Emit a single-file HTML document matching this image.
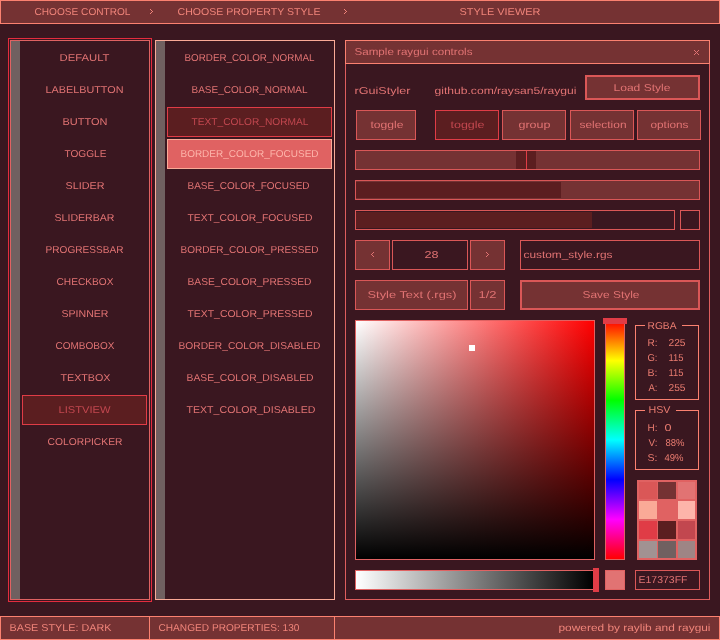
<!DOCTYPE html><html><head><meta charset="utf-8"><style>html,body{margin:0;padding:0;background:#3a1720;overflow:hidden}svg{display:block;will-change:transform}text{text-rendering:geometricPrecision;font-family:"Liberation Sans",sans-serif;font-size:10px}</style></head><body><svg width="720" height="640" viewBox="0 0 720 640"><defs>
<linearGradient id="gh" x1="0" y1="0" x2="1" y2="0"><stop offset="0" stop-color="#fff"/><stop offset="1" stop-color="#f00"/></linearGradient>
<linearGradient id="gv" x1="0" y1="0" x2="0" y2="1"><stop offset="0" stop-color="#000" stop-opacity="0"/><stop offset="1" stop-color="#000" stop-opacity="1"/></linearGradient>
<linearGradient id="hue" x1="0" y1="0" x2="0" y2="1">
<stop offset="0" stop-color="#f00"/><stop offset="0.1667" stop-color="#ff0"/><stop offset="0.3333" stop-color="#0f0"/>
<stop offset="0.5" stop-color="#0ff"/><stop offset="0.6667" stop-color="#00f"/><stop offset="0.8333" stop-color="#f0f"/><stop offset="1" stop-color="#f00"/></linearGradient>
<linearGradient id="ga" x1="0" y1="0" x2="1" y2="0"><stop offset="0" stop-color="#fff"/><stop offset="1" stop-color="#000"/></linearGradient>
</defs><g shape-rendering="crispEdges"><rect x="0" y="0" width="720" height="640" fill="#3a1720"/><rect x="0" y="0" width="720" height="24" fill="#fb8170"/><rect x="1" y="1" width="718" height="22" fill="#753233"/><rect x="150" y="9" width="1" height="1" fill="#f0847a"/><rect x="151" y="10" width="1" height="1" fill="#f0847a"/><rect x="152" y="11" width="1" height="1" fill="#f0847a"/><rect x="151" y="12" width="1" height="1" fill="#f0847a"/><rect x="150" y="13" width="1" height="1" fill="#f0847a"/><rect x="344" y="9" width="1" height="1" fill="#f0847a"/><rect x="345" y="10" width="1" height="1" fill="#f0847a"/><rect x="346" y="11" width="1" height="1" fill="#f0847a"/><rect x="345" y="12" width="1" height="1" fill="#f0847a"/><rect x="344" y="13" width="1" height="1" fill="#f0847a"/><rect x="0" y="616" width="720" height="24" fill="#fb8170"/><rect x="1" y="617" width="718" height="22" fill="#753233"/><rect x="149" y="616" width="1" height="24" fill="#fb8170"/><rect x="334" y="616" width="1" height="24" fill="#fb8170"/><rect x="8" y="38" width="144" height="564" fill="#e42c3e"/><rect x="9" y="39" width="142" height="562" fill="#3a1720"/><rect x="10" y="40" width="140" height="560" fill="#e06262"/><rect x="11" y="41" width="138" height="558" fill="#3a1720"/><rect x="11" y="41" width="9" height="558" fill="#706060"/><rect x="22" y="395" width="125" height="30" fill="#e03c46"/><rect x="23" y="396" width="123" height="28" fill="#5b1e20"/><rect x="155" y="40" width="180" height="560" fill="#faaa97"/><rect x="156" y="41" width="178" height="558" fill="#3a1720"/><rect x="156" y="41" width="9" height="558" fill="#706060"/><rect x="167" y="107" width="165" height="30" fill="#e03c46"/><rect x="168" y="108" width="163" height="28" fill="#5b1e20"/><rect x="167" y="139" width="165" height="30" fill="#faaa97"/><rect x="168" y="140" width="163" height="28" fill="#e06262"/><rect x="345" y="40" width="365" height="560" fill="#df5e5e"/><rect x="346" y="41" width="363" height="558" fill="#3a1720"/><rect x="345" y="40" width="365" height="24" fill="#fb8170"/><rect x="346" y="41" width="363" height="22" fill="#753233"/><rect x="694" y="50" width="1" height="1" fill="#e17373"/><rect x="698" y="50" width="1" height="1" fill="#e17373"/><rect x="695" y="51" width="1" height="1" fill="#e17373"/><rect x="697" y="51" width="1" height="1" fill="#e17373"/><rect x="696" y="52" width="1" height="1" fill="#e17373"/><rect x="695" y="53" width="1" height="1" fill="#e17373"/><rect x="697" y="53" width="1" height="1" fill="#e17373"/><rect x="694" y="54" width="1" height="1" fill="#e17373"/><rect x="698" y="54" width="1" height="1" fill="#e17373"/><rect x="585" y="75" width="115" height="25" fill="#da5757"/><rect x="587" y="77" width="111" height="21" fill="#753233"/><rect x="356" y="110" width="60" height="30" fill="#da5757"/><rect x="357" y="111" width="58" height="28" fill="#753233"/><rect x="435" y="110" width="64" height="30" fill="#e03c46"/><rect x="436" y="111" width="62" height="28" fill="#5b1e20"/><rect x="502" y="110" width="64" height="30" fill="#da5757"/><rect x="503" y="111" width="62" height="28" fill="#753233"/><rect x="570" y="110" width="64" height="30" fill="#da5757"/><rect x="571" y="111" width="62" height="28" fill="#753233"/><rect x="637" y="110" width="64" height="30" fill="#da5757"/><rect x="638" y="111" width="62" height="28" fill="#753233"/><rect x="355" y="150" width="345" height="20" fill="#da5757"/><rect x="356" y="151" width="343" height="18" fill="#753233"/><rect x="516" y="151" width="20" height="18" fill="#5b1e20"/><rect x="526" y="151" width="1" height="18" fill="#e03c46"/><rect x="355" y="180" width="345" height="20" fill="#da5757"/><rect x="356" y="181" width="343" height="18" fill="#753233"/><rect x="356" y="182" width="205" height="16" fill="#5b1e20"/><rect x="355" y="210" width="320" height="20" fill="#da5757"/><rect x="356" y="211" width="318" height="18" fill="#3a1720"/><rect x="356" y="212" width="236" height="16" fill="#5b1e20"/><rect x="680" y="210" width="20" height="20" fill="#da5757"/><rect x="681" y="211" width="18" height="18" fill="#3a1720"/><rect x="355" y="240" width="35" height="30" fill="#da5757"/><rect x="356" y="241" width="33" height="28" fill="#753233"/><rect x="373" y="252" width="1" height="1" fill="#e17373"/><rect x="372" y="253" width="1" height="1" fill="#e17373"/><rect x="371" y="254" width="1" height="1" fill="#e17373"/><rect x="372" y="255" width="1" height="1" fill="#e17373"/><rect x="373" y="256" width="1" height="1" fill="#e17373"/><rect x="392" y="240" width="76" height="30" fill="#da5757"/><rect x="393" y="241" width="74" height="28" fill="#3a1720"/><rect x="470" y="240" width="35" height="30" fill="#da5757"/><rect x="471" y="241" width="33" height="28" fill="#753233"/><rect x="486" y="252" width="1" height="1" fill="#e17373"/><rect x="487" y="253" width="1" height="1" fill="#e17373"/><rect x="488" y="254" width="1" height="1" fill="#e17373"/><rect x="487" y="255" width="1" height="1" fill="#e17373"/><rect x="486" y="256" width="1" height="1" fill="#e17373"/><rect x="520" y="240" width="180" height="30" fill="#da5757"/><rect x="521" y="241" width="178" height="28" fill="#3a1720"/><rect x="355" y="280" width="113" height="30" fill="#da5757"/><rect x="356" y="281" width="111" height="28" fill="#753233"/><rect x="470" y="280" width="35" height="30" fill="#da5757"/><rect x="471" y="281" width="33" height="28" fill="#753233"/><rect x="520" y="280" width="180" height="30" fill="#da5757"/><rect x="522" y="282" width="176" height="26" fill="#753233"/><rect x="355" y="320" width="240" height="240" fill="#e06262"/><rect x="356" y="321" width="238" height="238" fill="url(#gh)"/><rect x="356" y="321" width="238" height="238" fill="url(#gv)"/><rect x="469" y="345" width="6" height="6" fill="#ffffff"/><rect x="605" y="320" width="20" height="240" fill="#e06262"/><rect x="606" y="321" width="18" height="238" fill="url(#hue)"/><rect x="603" y="318" width="24" height="6" fill="#e03c46"/><rect x="355" y="570" width="240" height="20" fill="#e06262"/><rect x="356" y="571" width="237" height="18" fill="url(#ga)"/><rect x="593" y="568" width="6" height="24" fill="#e03c46"/><rect x="605" y="570" width="20" height="20" fill="#e06262"/><rect x="606" y="571" width="18" height="18" fill="#e17373"/><rect x="635" y="570" width="65" height="20" fill="#da5757"/><rect x="636" y="571" width="63" height="18" fill="#3a1720"/><rect x="635" y="325" width="10" height="1" fill="#fb8170"/><rect x="682" y="325" width="17" height="1" fill="#fb8170"/><rect x="635" y="399" width="64" height="1" fill="#fb8170"/><rect x="635" y="325" width="1" height="75" fill="#fb8170"/><rect x="698" y="325" width="1" height="75" fill="#fb8170"/><rect x="635" y="410" width="10" height="1" fill="#fb8170"/><rect x="676" y="410" width="23" height="1" fill="#fb8170"/><rect x="635" y="469" width="64" height="1" fill="#fb8170"/><rect x="635" y="410" width="1" height="60" fill="#fb8170"/><rect x="698" y="410" width="1" height="60" fill="#fb8170"/><rect x="637" y="480" width="60" height="80" fill="#e06262"/><rect x="639" y="482" width="18" height="17" fill="#da5757"/><rect x="658" y="482" width="18" height="17" fill="#753233"/><rect x="678" y="482" width="17" height="17" fill="#e17373"/><rect x="639" y="501" width="18" height="18" fill="#faaa97"/><rect x="658" y="501" width="18" height="18" fill="#e06262"/><rect x="678" y="501" width="17" height="18" fill="#fdb4aa"/><rect x="639" y="521" width="18" height="18" fill="#e03c46"/><rect x="658" y="521" width="18" height="18" fill="#5b1e20"/><rect x="678" y="521" width="17" height="18" fill="#c2474f"/><rect x="639" y="541" width="18" height="17" fill="#a19292"/><rect x="658" y="541" width="18" height="17" fill="#706060"/><rect x="678" y="541" width="17" height="17" fill="#9e8585"/></g><g opacity="0.999"><text x="34.50" y="15.0" textLength="96.00" lengthAdjust="spacingAndGlyphs" fill="#f0847a">CHOOSE CONTROL</text><text x="177.50" y="15.0" textLength="143.00" lengthAdjust="spacingAndGlyphs" fill="#f0847a">CHOOSE PROPERTY STYLE</text><text x="459.50" y="15.0" textLength="81.00" lengthAdjust="spacingAndGlyphs" fill="#f0847a">STYLE VIEWER</text><text x="9.50" y="631.0" textLength="102.00" lengthAdjust="spacingAndGlyphs" fill="#f0847a">BASE STYLE: DARK</text><text x="158.50" y="631.0" textLength="141.00" lengthAdjust="spacingAndGlyphs" fill="#f0847a">CHANGED PROPERTIES: 130</text><text x="558.50" y="631.0" textLength="152.00" lengthAdjust="spacingAndGlyphs" fill="#f0847a">powered by raylib and raygui</text><text x="59.50" y="61.0" textLength="50.00" lengthAdjust="spacingAndGlyphs" fill="#e17373">DEFAULT</text><text x="45.50" y="93.0" textLength="78.00" lengthAdjust="spacingAndGlyphs" fill="#e17373">LABELBUTTON</text><text x="62.50" y="125.0" textLength="45.00" lengthAdjust="spacingAndGlyphs" fill="#e17373">BUTTON</text><text x="64.50" y="157.0" textLength="42.00" lengthAdjust="spacingAndGlyphs" fill="#e17373">TOGGLE</text><text x="65.50" y="189.0" textLength="39.00" lengthAdjust="spacingAndGlyphs" fill="#e17373">SLIDER</text><text x="54.50" y="221.0" textLength="60.00" lengthAdjust="spacingAndGlyphs" fill="#e17373">SLIDERBAR</text><text x="45.50" y="253.0" textLength="78.00" lengthAdjust="spacingAndGlyphs" fill="#e17373">PROGRESSBAR</text><text x="56.50" y="285.0" textLength="57.00" lengthAdjust="spacingAndGlyphs" fill="#e17373">CHECKBOX</text><text x="61.50" y="317.0" textLength="47.00" lengthAdjust="spacingAndGlyphs" fill="#e17373">SPINNER</text><text x="55.50" y="349.0" textLength="59.00" lengthAdjust="spacingAndGlyphs" fill="#e17373">COMBOBOX</text><text x="60.50" y="381.0" textLength="50.00" lengthAdjust="spacingAndGlyphs" fill="#e17373">TEXTBOX</text><text x="58.50" y="413.0" textLength="52.00" lengthAdjust="spacingAndGlyphs" fill="#c2474f">LISTVIEW</text><text x="47.50" y="445.0" textLength="75.00" lengthAdjust="spacingAndGlyphs" fill="#e17373">COLORPICKER</text><text x="184.50" y="61.0" textLength="130.00" lengthAdjust="spacingAndGlyphs" fill="#e17373">BORDER_COLOR_NORMAL</text><text x="191.50" y="93.0" textLength="116.00" lengthAdjust="spacingAndGlyphs" fill="#e17373">BASE_COLOR_NORMAL</text><text x="191.50" y="125.0" textLength="117.00" lengthAdjust="spacingAndGlyphs" fill="#c2474f">TEXT_COLOR_NORMAL</text><text x="180.50" y="157.0" textLength="138.00" lengthAdjust="spacingAndGlyphs" fill="#fdb4aa">BORDER_COLOR_FOCUSED</text><text x="187.50" y="189.0" textLength="122.00" lengthAdjust="spacingAndGlyphs" fill="#e17373">BASE_COLOR_FOCUSED</text><text x="187.50" y="221.0" textLength="125.00" lengthAdjust="spacingAndGlyphs" fill="#e17373">TEXT_COLOR_FOCUSED</text><text x="180.50" y="253.0" textLength="138.00" lengthAdjust="spacingAndGlyphs" fill="#e17373">BORDER_COLOR_PRESSED</text><text x="187.50" y="285.0" textLength="124.00" lengthAdjust="spacingAndGlyphs" fill="#e17373">BASE_COLOR_PRESSED</text><text x="187.50" y="317.0" textLength="125.00" lengthAdjust="spacingAndGlyphs" fill="#e17373">TEXT_COLOR_PRESSED</text><text x="178.50" y="349.0" textLength="142.00" lengthAdjust="spacingAndGlyphs" fill="#e17373">BORDER_COLOR_DISABLED</text><text x="186.50" y="381.0" textLength="127.00" lengthAdjust="spacingAndGlyphs" fill="#e17373">BASE_COLOR_DISABLED</text><text x="186.50" y="413.0" textLength="129.00" lengthAdjust="spacingAndGlyphs" fill="#e17373">TEXT_COLOR_DISABLED</text><text x="354.50" y="55.0" textLength="118.00" lengthAdjust="spacingAndGlyphs" fill="#e17373">Sample raygui controls</text><text x="354.50" y="94.0" textLength="56.00" lengthAdjust="spacingAndGlyphs" fill="#e17373">rGuiStyler</text><text x="434.50" y="94.0" textLength="142.00" lengthAdjust="spacingAndGlyphs" fill="#e17373">github.com/raysan5/raygui</text><text x="613.50" y="91.0" textLength="57.00" lengthAdjust="spacingAndGlyphs" fill="#e17373">Load Style</text><text x="370.50" y="128.0" textLength="33.00" lengthAdjust="spacingAndGlyphs" fill="#e17373">toggle</text><text x="450.50" y="128.0" textLength="34.00" lengthAdjust="spacingAndGlyphs" fill="#c2474f">toggle</text><text x="518.50" y="128.0" textLength="32.00" lengthAdjust="spacingAndGlyphs" fill="#e17373">group</text><text x="579.50" y="128.0" textLength="47.00" lengthAdjust="spacingAndGlyphs" fill="#e17373">selection</text><text x="650.50" y="128.0" textLength="38.00" lengthAdjust="spacingAndGlyphs" fill="#e17373">options</text><text x="424.50" y="258.0" textLength="14.00" lengthAdjust="spacingAndGlyphs" fill="#e17373">28</text><text x="523.50" y="258.0" textLength="89.00" lengthAdjust="spacingAndGlyphs" fill="#e17373">custom_style.rgs</text><text x="367.50" y="298.0" textLength="89.00" lengthAdjust="spacingAndGlyphs" fill="#e17373">Style Text (.rgs)</text><text x="478.50" y="298.0" textLength="18.00" lengthAdjust="spacingAndGlyphs" fill="#e17373">1/2</text><text x="582.50" y="298.0" textLength="57.00" lengthAdjust="spacingAndGlyphs" fill="#e17373">Save Style</text><text x="638.50" y="583.0" textLength="49.00" lengthAdjust="spacingAndGlyphs" fill="#e17373">E17373FF</text><text x="647.50" y="329.0" textLength="29.00" lengthAdjust="spacingAndGlyphs" fill="#ea7c70">RGBA</text><text x="647.50" y="346.0" textLength="10.00" lengthAdjust="spacingAndGlyphs" fill="#ea7c70">R:</text><text x="668.50" y="346.0" textLength="17.00" lengthAdjust="spacingAndGlyphs" fill="#ea7c70">225</text><text x="647.50" y="361.0" textLength="10.00" lengthAdjust="spacingAndGlyphs" fill="#ea7c70">G:</text><text x="668.50" y="361.0" textLength="15.00" lengthAdjust="spacingAndGlyphs" fill="#ea7c70">115</text><text x="647.50" y="376.0" textLength="10.00" lengthAdjust="spacingAndGlyphs" fill="#ea7c70">B:</text><text x="668.50" y="376.0" textLength="15.00" lengthAdjust="spacingAndGlyphs" fill="#ea7c70">115</text><text x="648.50" y="391.0" textLength="9.00" lengthAdjust="spacingAndGlyphs" fill="#ea7c70">A:</text><text x="668.50" y="391.0" textLength="17.00" lengthAdjust="spacingAndGlyphs" fill="#ea7c70">255</text><text x="648.50" y="413.0" textLength="22.00" lengthAdjust="spacingAndGlyphs" fill="#ea7c70">HSV</text><text x="647.50" y="431.0" textLength="10.00" lengthAdjust="spacingAndGlyphs" fill="#ea7c70">H:</text><text x="664.50" y="431.0" textLength="7.00" lengthAdjust="spacingAndGlyphs" fill="#ea7c70">0</text><text x="648.50" y="446.0" textLength="9.00" lengthAdjust="spacingAndGlyphs" fill="#ea7c70">V:</text><text x="665.50" y="446.0" textLength="19.00" lengthAdjust="spacingAndGlyphs" fill="#ea7c70">88%</text><text x="647.50" y="461.0" textLength="10.00" lengthAdjust="spacingAndGlyphs" fill="#ea7c70">S:</text><text x="664.50" y="461.0" textLength="19.00" lengthAdjust="spacingAndGlyphs" fill="#ea7c70">49%</text></g></svg></body></html>
